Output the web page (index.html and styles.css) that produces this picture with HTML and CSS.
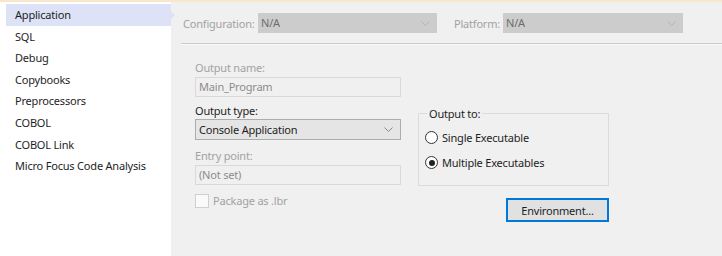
FILE: index.html
```html
<!DOCTYPE html>
<html lang="en">
<head>
  <meta charset="UTF-8">
  <title>Project Properties</title>
  <link rel="stylesheet" href="styles.css">
</head>
<body>
  <div class="window">
    <ul class="nav">
      <li class="active">Application</li>
      <li>SQL</li>
      <li>Debug</li>
      <li>Copybooks</li>
      <li>Preprocessors</li>
      <li>COBOL</li>
      <li>COBOL Link</li>
      <li>Micro Focus Code Analysis</li>
    </ul>

    <div class="page">
      <div class="config-bar">
        <span class="muted config-label">Configuration:</span>
        <div class="combo disabled config">N/A
          <svg class="chev" width="9" height="5" viewBox="0 0 9 5"><polyline points="0.5,0.5 4.5,4.5 8.5,0.5" fill="none" stroke="currentColor"/></svg>
        </div>
        <span class="muted platform-label">Platform:</span>
        <div class="combo disabled platform">N/A
          <svg class="chev" width="9" height="5" viewBox="0 0 9 5"><polyline points="0.5,0.5 4.5,4.5 8.5,0.5" fill="none" stroke="currentColor"/></svg>
        </div>
      </div>
      <div class="rule"></div>

      <div class="body">
        <div class="left">
          <label class="muted">Output name:</label>
          <div class="textbox">Main_Program</div>

          <label class="enabled">Output type:</label>
          <div class="combo select">Console Application
            <svg class="chev" width="9" height="5" viewBox="0 0 9 5"><polyline points="0.5,0.5 4.5,4.5 8.5,0.5" fill="none" stroke="currentColor"/></svg>
          </div>

          <label class="muted">Entry point:</label>
          <div class="textbox">(Not set)</div>

          <div class="check">
            <span class="box"></span>
            <span class="muted">Package as .lbr</span>
          </div>
        </div>

        <div class="right">
          <fieldset class="group">
            <legend>Output to:</legend>
            <div class="radio"><span class="dot"></span>Single Executable</div>
            <div class="radio"><span class="dot on"></span>Multiple Executables</div>
          </fieldset>
          <button class="btn">Environment...</button>
        </div>
      </div>
    </div>
  </div>
</body>
</html>
```

FILE: styles.css
```css
/* General */
body {
  margin: 0;
  font-family: 'Noto Sans', sans-serif;
  font-size: 11px;
  letter-spacing: -0.2px;
  color: #1e1e1e;
  background: #f0f0f0;
}

.window {
  display: flex;
  height: 256px;
  border-top: 2px solid #f6e7c9;
  box-sizing: border-box;
}

/* Sidebar */
.nav {
  list-style: none;
  margin: 0;
  padding: 2px 0 0 6px;
  width: 165px;
  background: #fff;
}

.nav li {
  height: 21.6px;
  line-height: 21.6px;
  padding-left: 9px;
  position: relative;
}

.nav li.active {
  background: #dde2f6;
}

.nav li.active::after {
  content: "";
  position: absolute;
  right: -4px;
  top: 7px;
  border-left: 4px solid #dde2f6;
  border-top: 4px solid transparent;
  border-bottom: 4px solid transparent;
}

/* Main page */
.page {
  flex: 1;
  padding-left: 10px;
}

.muted {
  color: #a2a2a2;
}

.config-bar {
  display: flex;
  align-items: center;
  height: 20px;
  margin-top: 11px;
  padding-left: 2px;
}

.config-label {
  width: 75px;
}

.combo {
  position: relative;
  height: 20px;
  line-height: 19px;
  box-sizing: border-box;
  padding-left: 3px;
}

.combo .chev {
  position: absolute;
  right: 7px;
  top: 8px;
  color: #707070;
}

.combo.disabled {
  background: #cccccc;
  color: #6d6d6d;
}

.combo.disabled .chev {
  color: #b4b4b4;
}

.config {
  width: 179px;
}

.platform-label {
  margin-left: 17px;
  width: 49px;
}

.platform {
  width: 180px;
}

.rule {
  height: 1px;
  margin-top: 10px;
  background: #c9c9c9;
  border-bottom: 1px solid #fafafa;
}

.body {
  display: flex;
  padding-left: 14px;
}

/* Left column */
.left {
  width: 206px;
  display: flex;
  flex-direction: column;
}

.left label {
  display: block;
  height: 15px;
  line-height: 15px;
}

.left label:first-child {
  margin-top: 15px;
}

.textbox {
  height: 20px;
  line-height: 18px;
  box-sizing: border-box;
  border: 1px solid #d9d9d9;
  padding-left: 3px;
  color: #8c8c8c;
  margin: 2px 0 6px;
}

.combo.select {
  height: 21px;
  margin: 1px 0 8px;
  background: #e5e5e5;
  border: 1px solid #adadad;
  line-height: 19px;
}

.combo.select .chev {
  top: 7px;
  color: #8a8a8a;
}

.check {
  display: flex;
  align-items: center;
  gap: 4px;
  margin-top: 2px;
}

.check .box {
  width: 12px;
  height: 12px;
  border: 1px solid #cfcfcf;
  background: #fafafa;
}

/* Right column */
.right {
  margin-left: 17px;
  padding-top: 62px;
  display: flex;
  flex-direction: column;
  align-items: flex-end;
  width: 191px;
}

.group {
  width: 191px;
  height: 79px;
  box-sizing: border-box;
  margin: 0;
  padding: 5px 0 0 6px;
  border: 1px solid #dcdcdc;
}

.group legend {
  padding: 0 2px;
  margin-left: 2px;
  line-height: 13px;
}

.radio {
  display: flex;
  align-items: center;
  height: 25px;
  gap: 4px;
}

.radio .dot {
  width: 11px;
  height: 11px;
  border: 1px solid #333;
  border-radius: 50%;
  background: #fff;
  position: relative;
}

.radio .dot.on::after {
  content: "";
  position: absolute;
  left: 2.5px;
  top: 2.5px;
  width: 6px;
  height: 6px;
  border-radius: 50%;
  background: #222;
}

.btn {
  margin-top: 12px;
  width: 103px;
  height: 24px;
  font-family: inherit;
  font-size: 11px;
  letter-spacing: -0.2px;
  color: #1e1e1e;
  background: #e1e1e1;
  border: 2px solid #0078d7;
}
```
